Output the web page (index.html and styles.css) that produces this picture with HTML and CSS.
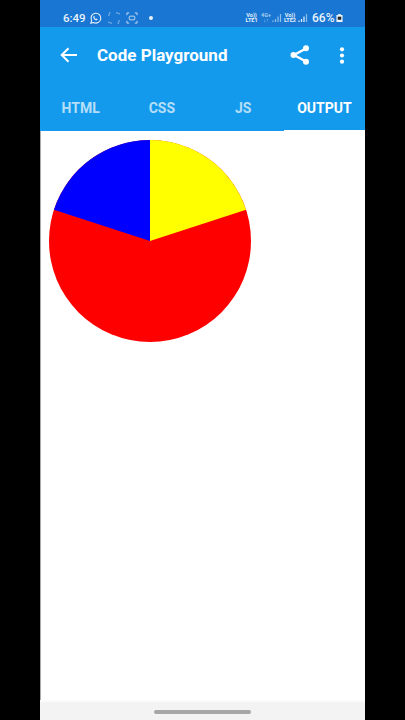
FILE: index.html
```html
<!DOCTYPE html>
<html lang="en">
<head>
<meta charset="utf-8">
<title>Code Playground</title>
<link rel="stylesheet" href="styles.css">
</head>
<body>
<main class="phone">
  <header class="status">
    <div class="status-left">
      <span class="time">6:49</span>
      <svg class="wa" viewBox="0 0 14 14" width="13" height="13"><path d="M2 12l.8-2.800A5.300 5.300 0 1 1 4.900 11.300z" fill="none" stroke="#e8f2fb" stroke-width="1.200"/><path d="M5 4.500c-.8.800-.4 2 .7 3.200s2.400 1.700 3.200.9l.3-.8-1.300-.8-.6.500c-.7-.2-1.300-.9-1.500-1.500l.5-.6-.7-1.300z" fill="#e8f2fb"/></svg>
      <svg class="shot" viewBox="0 0 13 13" width="12" height="12"><path d="M1 4V1h3M9 1h3v3M12 9v3H9M4 12H1V9" fill="none" stroke="#cfe2f5" stroke-width="1" stroke-dasharray="1.500 1.500"/></svg>
      <svg class="shot" viewBox="0 0 13 13" width="12" height="12"><path d="M1 3.500V1h2.500M9.500 1H12v2.500M12 9.500V12H9.500M3.500 12H1V9.500" fill="none" stroke="#cfe2f5" stroke-width="1"/><rect x="3.500" y="4.500" width="6" height="4" rx="1" fill="none" stroke="#cfe2f5"/></svg>
      <span class="dot"></span>
    </div>
    <div class="status-right">
      <span class="net">Vo))<br>LTE1</span>
      <span class="net dim">4G+<br>↓↑</span>
      <svg viewBox="0 0 10 10" width="10" height="10"><path d="M1 9V7.500M3.500 9V6M6 9V3.500M8.500 9V1" stroke="#8fc0ec" stroke-width="1.200"/></svg>
      <span class="net">Vo))<br>LTE2</span>
      <svg viewBox="0 0 10 10" width="10" height="10"><path d="M1 9V7.500M3.500 9V6M6 9V3.500" stroke="#e8f2fb" stroke-width="1.200"/><path d="M8.500 9V1" stroke="#8fc0ec" stroke-width="1.200"/></svg>
      <span class="pct">66%</span>
      <svg viewBox="0 0 8 9" width="7" height="8"><path d="M2.500 0h3v1H7.500V9H.5V1h2z" fill="#e8f2fb"/><rect x="2" y="3" width="4" height="3.500" fill="#222"/></svg>
    </div>
  </header>
  <div class="toolbar">
    <svg class="back" viewBox="0 0 18 16" width="18" height="16"><path d="M17 8H2M8.500 1.200 1.700 8l6.800 6.800" fill="none" stroke="#fff" stroke-width="2"/></svg>
    <h1 class="title">Code Playground</h1>
    <svg class="share" viewBox="0 0 20 20" width="20" height="20"><path d="M16 3.500 4 10l12 6.500" fill="none" stroke="#fff" stroke-width="2.400"/><circle cx="16" cy="3.200" r="3" fill="#fff"/><circle cx="3.500" cy="10" r="3" fill="#fff"/><circle cx="16" cy="16.800" r="3" fill="#fff"/></svg>
    <svg class="more" viewBox="0 0 6 18" width="6" height="17"><circle cx="3" cy="2.500" r="2.200" fill="#fff"/><circle cx="3" cy="9" r="2.200" fill="#fff"/><circle cx="3" cy="15.500" r="2.200" fill="#fff"/></svg>
  </div>
  <nav class="tabs">
    <span class="tab">HTML</span>
    <span class="tab">CSS</span>
    <span class="tab">JS</span>
    <span class="tab active">OUTPUT</span>
  </nav>
  <section class="output">
    <svg class="pie" viewBox="-101 -101 202 202" width="202" height="202">
      <circle r="101" fill="#f00"/>
      <path d="M0 0V-101A101 101 0 0 1 96.060 -31.210Z" fill="#ff0"/>
      <path d="M0 0V-101A101 101 0 0 0 -96.060 -31.210Z" fill="#00f"/>
    </svg>
  </section>
  <footer class="navbar"><span class="pill"></span></footer>
</main>
</body>
</html>
```
FILE: styles.css
```css
* { box-sizing: border-box; }
html, body { margin: 0; height: 100%; background: #000; overflow: hidden; }
body { display: flex; justify-content: center; font-family: Roboto, "Liberation Sans", sans-serif; }
.phone { width: 325px; height: 720px; background: #fff; display: flex; flex-direction: column; box-shadow: inset 1px 0 #aaa; }
.status { height: 27px; flex: none; background: #1976d2; color: #e8f2fb; display: flex; align-items: center; justify-content: space-between; padding: 9px 22px 0 23px; }
.status-left, .status-right { display: flex; align-items: center; }
.status-left { gap: 3px; }
.time { font-size: 11.500px; font-weight: 500; margin-right: 1px; }
.wa { margin-left: -1px; }
.shot { margin-left: 3px; }
.dot { width: 4px; height: 4px; margin-left: 8px; border-radius: 50%; background: #e8f2fb; }
.status-right { gap: 1.500px; }
.net { font-size: 5.500px; line-height: 5px; font-weight: 700; text-align: center; }
.net.dim { color: #a9cff0; margin-left: 2px; }
.pct { font-size: 12px; font-weight: 500; margin-left: 3px; }
.toolbar { height: 56px; flex: none; background: #149aed; display: flex; align-items: center; padding: 0 20px 0 20px; color: #fff; }
.title { flex: 1; margin: 0 0 0 19px; font-size: 17px; font-weight: 700; }
.share { margin-right: 29px; }
.tabs { height: 48px; flex: none; background: #149aed; display: grid; grid-template-columns: repeat(4, 1fr); }
.tab { display: flex; align-items: center; justify-content: center; padding-top: 2px; font-size: 14px; font-weight: 700; color: #b5def8; }
.tab.active { color: #fff; border-bottom: 2px solid #fff; padding-top: 3px; margin-bottom: -1px; }
.output { flex: 1; padding: 9px 0 0 9px; min-height: 0; }
.pie { display: block; }
.navbar { height: 20px; flex: none; background: linear-gradient(#fff, #f3f3f3 3px); display: flex; justify-content: center; padding-top: 10px; }
.pill { width: 97px; height: 4px; border-radius: 2px; background: #a6a6a6; }
```
